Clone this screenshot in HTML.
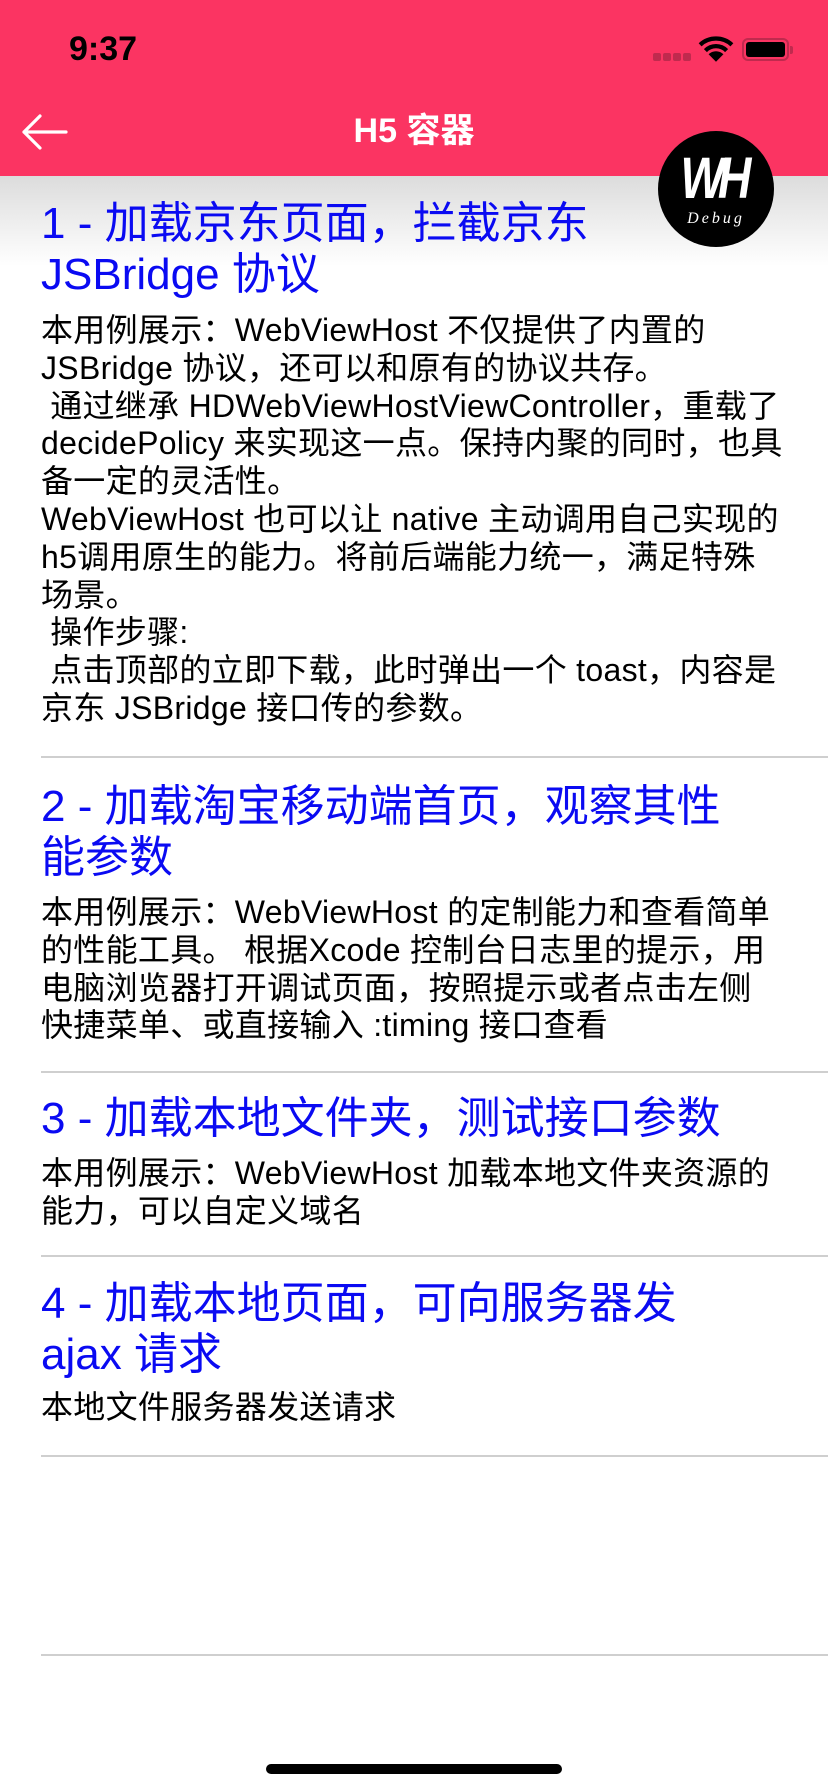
<!DOCTYPE html>
<html><head><meta charset="utf-8"><style>
*{margin:0;padding:0;box-sizing:border-box}
body{width:828px;height:1792px;background:#fff;position:relative;overflow:hidden;font-family:"Liberation Sans","Noto Sans CJK SC",sans-serif}
.hdr{position:absolute;left:0;top:0;width:828px;height:176px;background:#fb3462}
.shadow{position:absolute;left:0;top:176px;width:828px;height:90px;background:linear-gradient(#dcdcdc,#fff)}
.t{position:absolute;left:41px;color:#0a0af2;font-size:44px;line-height:51px;white-space:nowrap}
.b{position:absolute;left:41px;color:#000;font-size:32px;line-height:37.8px;white-space:pre;letter-spacing:0.3px}
.sep{position:absolute;left:41px;right:0;height:2px;background:#cfcfcf}
</style></head><body>
<div class="hdr"></div>
<div class="shadow"></div>
<div style="position:absolute;left:69px;top:29px;font-size:34px;font-weight:bold;color:#000;line-height:40px">9:37</div>
<div style="position:absolute;left:653px;top:53px;width:8px;height:8px;border-radius:2px;background:#c02a4e"></div>
<div style="position:absolute;left:663px;top:53px;width:8px;height:8px;border-radius:2px;background:#c02a4e"></div>
<div style="position:absolute;left:673px;top:53px;width:8px;height:8px;border-radius:2px;background:#c02a4e"></div>
<div style="position:absolute;left:683px;top:53px;width:8px;height:8px;border-radius:2px;background:#c02a4e"></div>
<svg style="position:absolute;left:698px;top:35px" width="36" height="28" viewBox="0 0 34 26"><path d="M2 9 A22 22 0 0 1 32 9" stroke="#000" stroke-width="4" fill="none"/><path d="M7 14.5 A14 14 0 0 1 27 14.5" stroke="#000" stroke-width="4" fill="none"/><path d="M17 25 L10 18 A10 10 0 0 1 24 18 Z" fill="#000"/></svg>
<div style="position:absolute;left:742px;top:38px;width:47px;height:23px;border:2px solid #c02a4e;border-radius:6px;padding:2px"><div style="width:100%;height:100%;background:#000;border-radius:3px"></div></div>
<div style="position:absolute;left:790px;top:46px;width:3px;height:8px;background:#c02a4e;border-radius:0 2px 2px 0"></div>
<svg style="position:absolute;left:20px;top:113px" width="50" height="38" viewBox="0 0 50 38"><path d="M46 19 H4 M20 3 L4 19 L20 35" stroke="#fff" stroke-width="3.2" fill="none" stroke-linecap="round" stroke-linejoin="round"/></svg>
<div style="position:absolute;left:0;width:828px;top:109px;text-align:center;color:#fff;font-size:34px;font-weight:bold;line-height:44px">H5 容器</div>
<div style="position:absolute;left:658px;top:131px;width:116px;height:116px;border-radius:50%;background:#000;color:#fff;text-align:center">
<div style="font-size:58px;font-weight:bold;font-style:italic;letter-spacing:-8px;line-height:56px;margin-top:20px;transform:scaleX(0.8);padding-right:8px">WH</div>
<div style="font-family:'Liberation Serif',serif;font-style:italic;font-size:16px;letter-spacing:3px;line-height:16px;margin-top:4px">Debug</div>
</div>

<div class="t" style="top:198px">1 - 加载京东页面，拦截京东<br>JSBridge 协议</div>
<div class="b" style="top:312px">本用例展示：WebViewHost 不仅提供了内置的
JSBridge 协议，还可以和原有的协议共存。
 通过继承 HDWebViewHostViewController，重载了
decidePolicy 来实现这一点。保持内聚的同时，也具
备一定的灵活性。
WebViewHost 也可以让 native 主动调用自己实现的
h5调用原生的能力。将前后端能力统一，满足特殊
场景。
 操作步骤:
 点击顶部的立即下载，此时弹出一个 toast，内容是
京东 JSBridge 接口传的参数。</div>
<div class="sep" style="top:756px"></div>

<div class="t" style="top:781px">2 - 加载淘宝移动端首页，观察其性<br>能参数</div>
<div class="b" style="top:894px">本用例展示：WebViewHost 的定制能力和查看简单
的性能工具。 根据Xcode 控制台日志里的提示，用
电脑浏览器打开调试页面，按照提示或者点击左侧
快捷菜单、或直接输入 :timing 接口查看</div>
<div class="sep" style="top:1071px"></div>

<div class="t" style="top:1093px">3 - 加载本地文件夹，测试接口参数</div>
<div class="b" style="top:1155px">本用例展示：WebViewHost 加载本地文件夹资源的
能力，可以自定义域名</div>
<div class="sep" style="top:1255px"></div>

<div class="t" style="top:1278px">4 - 加载本地页面，可向服务器发<br>ajax 请求</div>
<div class="b" style="top:1389px">本地文件服务器发送请求</div>
<div class="sep" style="top:1455px"></div>
<div class="sep" style="top:1654px"></div>

<div style="position:absolute;left:266px;top:1764px;width:296px;height:10px;border-radius:5px;background:#000"></div>
</body></html>
